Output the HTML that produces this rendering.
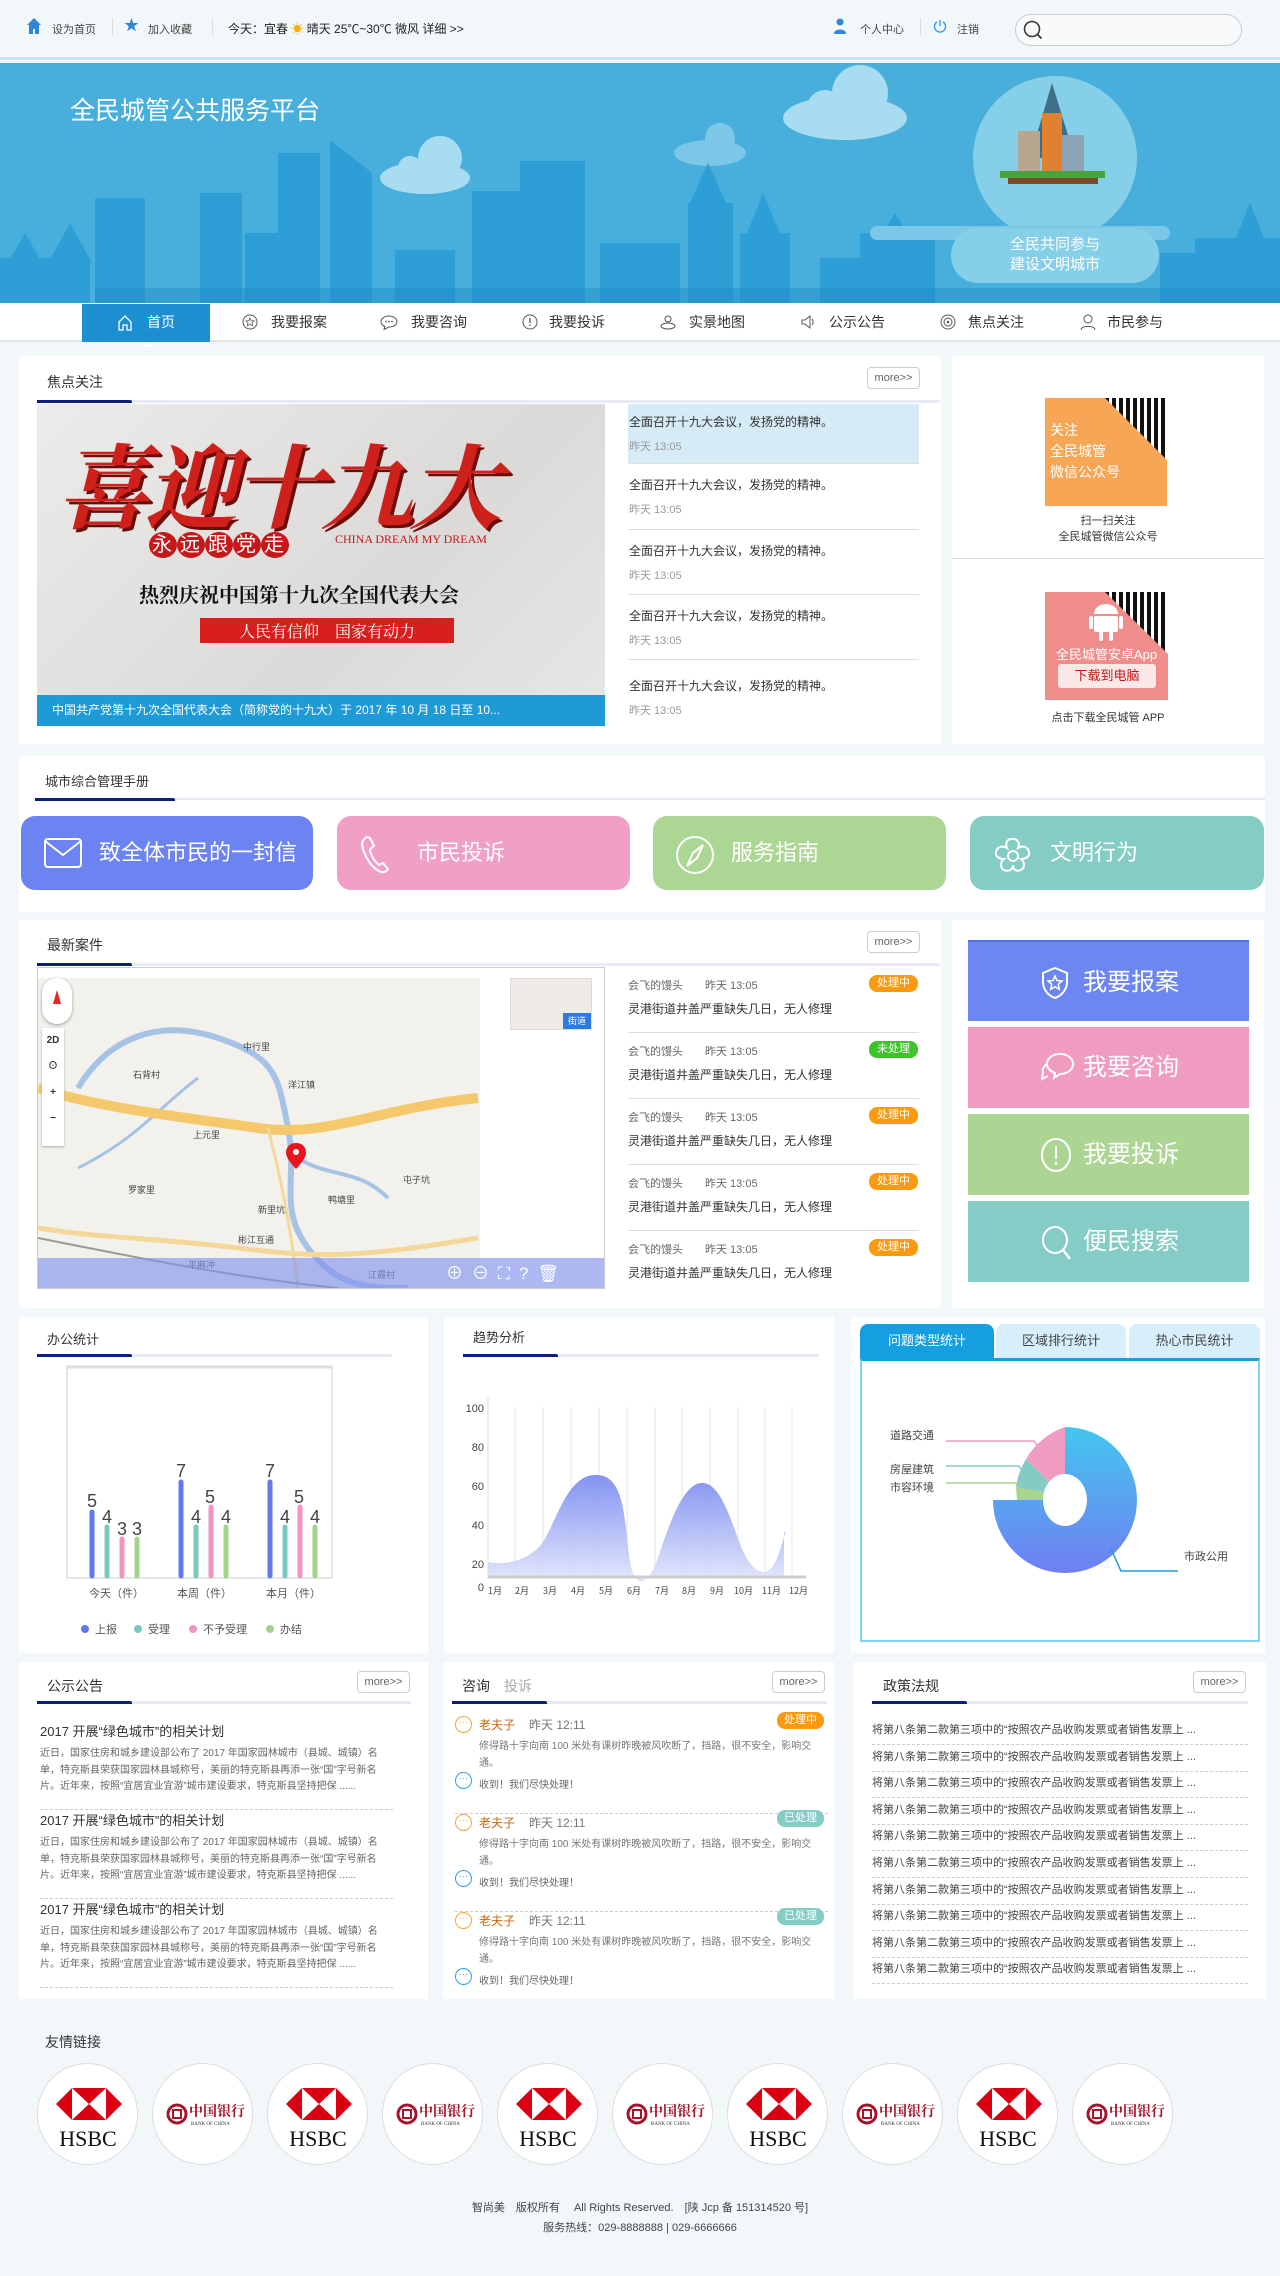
<!DOCTYPE html>
<html><head><meta charset="utf-8">
<style>
*{margin:0;padding:0;box-sizing:border-box}
body{width:1280px;height:2276px;background:#f2f7fa;font-family:"Liberation Sans","Noto Sans CJK SC",sans-serif;color:#333;position:relative;overflow:hidden;font-size:12px}
.a{position:absolute}
.panel{position:absolute;background:#fff}
.ttl{position:absolute;font-size:14px;color:#333}
.uline{position:absolute;height:3px;background:#e6ebf5}
.uline i{position:absolute;left:0;top:0;width:117px;height:3px;background:#0b1e7a;border-radius:0 2px 0 0}
.more{position:absolute;width:53px;height:22px;border:1px solid #ccc;border-radius:4px;font-size:11px;color:#666;text-align:center;line-height:20px;background:#fff}
.nav span{position:absolute;top:303px;height:39px;line-height:39px;font-size:14px;color:#333}
.focus div{position:absolute;left:628px;width:291px;border-bottom:1px solid #ddd}
.focus b{display:block;font-weight:normal;font-size:12px;color:#333;margin:9px 0 0 1px}
.focus s{display:block;text-decoration:none;font-size:11px;color:#999;margin:8px 0 0 1px}
.btn4{position:absolute;top:816px;height:74px;border-radius:14px;color:#fff;font-size:22px;line-height:74px}
.btn4 svg{position:absolute;left:22px;top:19px}
.btn4 span{position:absolute;left:78px}
.case div{position:absolute;left:628px;width:291px;height:66px;border-bottom:1px solid #ddd}
.case .n{position:absolute;left:0;top:10px;font-size:11px;color:#666}
.case .t{position:absolute;left:0;top:33px;font-size:12px;color:#333}
.case .bd{position:absolute;left:241px;top:8px;width:49px;height:17px;border-radius:8px;color:#fff;font-size:11px;text-align:center;line-height:17px}
.rb{position:absolute;left:968px;width:281px;height:81px;color:#fff;font-size:24px;line-height:81px}
.rb span{position:absolute;left:115px}
.rb svg{position:absolute;left:72px;top:24px}
.notice .it{position:absolute;left:40px;width:353px;border-bottom:1px dashed #ccc;height:89px}
.notice h4{font-weight:normal;font-size:13px;color:#333;margin-top:0}
.notice p{font-size:10px;color:#666;line-height:16.5px;margin-top:6px}
.cs{position:absolute;left:455px;width:373px;height:98px;border-bottom:1px dashed #ccc}
.cs .nm{position:absolute;left:24px;top:0;font-size:12px;color:#c8660f}
.cs .tm{position:absolute;left:74px;top:0;font-size:12px;color:#777}
.cs .tx{position:absolute;left:24px;top:22px;width:345px;font-size:10px;color:#777;line-height:17px}
.cs .rp{position:absolute;left:24px;top:60px;font-size:10px;color:#666}
.cs .bd{position:absolute;right:4px;top:-4px;width:47px;height:17px;border-radius:8px;color:#fff;font-size:11px;text-align:center;line-height:17px}
.cs .ic1,.cs .ic2{position:absolute;left:0;width:17px;height:17px;border-radius:50%;border:1.5px solid #f3a23e;font-size:9px;line-height:10px;text-align:center;color:#f3a23e}
.cs .ic2{border-color:#2f9ee8;color:#2f9ee8}
.pl div{position:absolute;left:872px;width:376px;height:26.6px;border-bottom:1px dashed #ccc;font-size:11px;color:#444;line-height:24px;white-space:nowrap;overflow:hidden}
.circ{position:absolute;top:2063px;width:101px;height:102px;border-radius:50%;background:#fff;border:1px solid #ddd}
</style></head><body>

<!-- top bar -->
<div class="a" style="left:0;top:0;width:1280px;height:60px;background:#f2f7fa;border-bottom:3px solid #c9e3f3"></div>
<svg class="a" style="left:27px;top:18px" width="14" height="16" viewBox="0 0 14 16"><path d="M7 0L0 7h2v9h4v-5h2v5h4V7h2z" fill="#2f86d6"/></svg>
<div class="a" style="left:52px;top:21px;font-size:11px;color:#444">设为首页</div>
<div class="a" style="left:112px;top:18px;width:1px;height:18px;background:#ddd"></div>
<div class="a" style="left:124px;top:18px;color:#2f86d6;font-size:15px;line-height:15px">★</div>
<div class="a" style="left:148px;top:21px;font-size:11px;color:#444">加入收藏</div>
<div class="a" style="left:212px;top:18px;width:1px;height:18px;background:#ddd"></div>
<div class="a" style="left:228px;top:20px;font-size:12px;color:#222">今天：宜春 <span style="color:#f6b012">☀</span> 晴天 25℃~30℃ 微风 详细 &gt;&gt;</div>
<svg class="a" style="left:834px;top:18px" width="12" height="16" viewBox="0 0 12 16"><circle cx="6" cy="4" r="3.5" fill="#2f86d6"/><path d="M0 16c0-6 12-6 12 0z" fill="#2f86d6"/></svg>
<div class="a" style="left:860px;top:21px;font-size:11px;color:#444">个人中心</div>
<div class="a" style="left:920px;top:18px;width:1px;height:18px;background:#ddd"></div>
<svg class="a" style="left:933px;top:19px" width="14" height="14" viewBox="0 0 14 14"><path d="M4 3a5.5 5.5 0 1 0 6 0" fill="none" stroke="#2f9ee8" stroke-width="1.4"/><path d="M7 1v6" stroke="#2f9ee8" stroke-width="1.4"/></svg>
<div class="a" style="left:957px;top:21px;font-size:11px;color:#444">注销</div>
<div class="a" style="left:1015px;top:14px;width:227px;height:32px;border:1px solid #ccc;border-radius:16px;background:#f8fafb"></div>
<svg class="a" style="left:1022px;top:19px" width="22" height="22" viewBox="0 0 22 22"><circle cx="10" cy="10" r="7.5" fill="none" stroke="#333" stroke-width="1.5"/><path d="M15.5 15.5l4 4" stroke="#333" stroke-width="1.6"/></svg>

<!-- banner -->
<div class="a" style="left:0;top:63px;width:1280px;height:240px;background:#48afdc;overflow:hidden">
<svg width="1280" height="240" viewBox="0 0 1280 240">
<g fill="#a7dcf1"><ellipse cx="845" cy="55" rx="62" ry="22"/><circle cx="860" cy="30" r="28"/><circle cx="825" cy="45" r="18"/></g>
<g fill="#7cc6e8"><ellipse cx="710" cy="90" rx="36" ry="13"/><circle cx="720" cy="75" r="15"/></g>
<g fill="#a7dcf1"><ellipse cx="425" cy="115" rx="45" ry="16"/><circle cx="440" cy="95" r="22"/><circle cx="410" cy="105" r="12"/></g>
<g fill="#2d9fd6">
<rect x="95" y="135" width="50" height="105"/><rect x="200" y="130" width="42" height="110"/><rect x="278" y="90" width="42" height="150"/><polygon points="330,77 372,110 372,240 330,240"/>
<rect x="472" y="128" width="50" height="112"/><rect x="520" y="98" width="65" height="142"/><rect x="688" y="140" width="45" height="100"/><polygon points="708,100 690,140 726,140"/>
<rect x="740" y="170" width="50" height="70"/><polygon points="763,130 745,175 782,175"/><rect x="395" y="187" width="60" height="53"/>
<rect x="0" y="195" width="90" height="45"/><polygon points="25,170 5,205 45,205"/><polygon points="70,160 48,200 92,200"/>
<rect x="245" y="170" width="40" height="70"/><rect x="860" y="170" width="75" height="70"/><polygon points="895,150 860,205 930,205"/>
<rect x="1195" y="175" width="85" height="65"/><polygon points="1250,140 1230,190 1270,190"/><rect x="1160" y="190" width="40" height="50"/>
<rect x="600" y="180" width="80" height="60"/><rect x="820" y="195" width="40" height="45"/>
</g>
<g fill="#1f8fc6"><rect x="95" y="225" width="1185" height="15" opacity=".5"/></g>
<circle cx="1055" cy="95" r="82" fill="#86cfe8"/>
<rect x="870" y="163" width="300" height="14" rx="7" fill="#7cc6e8"/>
<rect x="951" y="165" width="208" height="55" rx="27" fill="#86cfe8"/>
<g><polygon points="1052,20 1030,95 1075,95" fill="#3d6f88"/><rect x="1018" y="68" width="22" height="40" fill="#b9a690"/><rect x="1042" y="50" width="20" height="58" fill="#e08030"/><rect x="1062" y="72" width="22" height="36" fill="#8aa3b5"/><rect x="1000" y="108" width="105" height="7" fill="#4aa23c"/><rect x="1008" y="115" width="90" height="6" fill="#7a4a28"/></g>
</svg>
<div class="a" style="left:70px;top:28px;font-size:25px;color:#fff">全民城管公共服务平台</div>
<div class="a" style="left:951px;top:172px;width:208px;text-align:center;font-size:15px;color:#fff;line-height:20px">全民共同参与<br>建设文明城市</div>
</div>

<!-- nav -->
<div class="a" style="left:0;top:303px;width:1280px;height:39px;background:#fff;border-bottom:2px solid #dfe3e6"></div>
<div class="a" style="left:82px;top:304px;width:128px;height:38px;background:#1c8fd0"></div>
<div class="a" style="left:143px;top:337px;width:0;height:0;border:5px solid transparent;border-bottom-color:#fff"></div>
<div class="nav">
<svg class="a" style="left:118px;top:315px" width="14" height="16" viewBox="0 0 14 16"><path d="M1 7L7 1l6 6v8H9v-5H5v5H1z" fill="none" stroke="#fff" stroke-width="1.3"/></svg>
<span style="left:147px;color:#fff">首页</span>
<svg class="a" style="left:242px;top:314px" width="16" height="16" viewBox="0 0 16 16"><circle cx="8" cy="8" r="7" fill="none" stroke="#555"/><path d="M8 4l1.2 2.6 2.8.3-2 2 .6 2.8L8 10.3l-2.6 1.4.6-2.8-2-2 2.8-.3z" fill="none" stroke="#555" stroke-width=".8"/></svg>
<span style="left:271px">我要报案</span>
<svg class="a" style="left:380px;top:315px" width="18" height="15" viewBox="0 0 18 15"><path d="M9 1c4.4 0 8 2.6 8 5.6S13.4 12 9 12l-5 2.5 1-3C2.5 10.5 1 8.7 1 6.6 1 3.6 4.6 1 9 1z" fill="none" stroke="#555"/><circle cx="6" cy="6.5" r=".9" fill="#555"/><circle cx="9" cy="6.5" r=".9" fill="#555"/><circle cx="12" cy="6.5" r=".9" fill="#555"/></svg>
<span style="left:411px">我要咨询</span>
<svg class="a" style="left:522px;top:314px" width="16" height="16" viewBox="0 0 16 16"><circle cx="8" cy="8" r="7" fill="none" stroke="#555"/><path d="M8 4v5M8 10.5v1.5" stroke="#555" stroke-width="1.3"/></svg>
<span style="left:549px">我要投诉</span>
<svg class="a" style="left:660px;top:314px" width="16" height="16" viewBox="0 0 16 16"><circle cx="8" cy="5" r="3" fill="none" stroke="#555"/><ellipse cx="8" cy="12" rx="7" ry="3" fill="none" stroke="#555"/></svg>
<span style="left:689px">实景地图</span>
<svg class="a" style="left:800px;top:314px" width="16" height="16" viewBox="0 0 16 16"><path d="M2 6h3l5-4v12l-5-4H2z" fill="none" stroke="#555"/><path d="M12 5c1.5 1.5 1.5 4.5 0 6" fill="none" stroke="#555"/></svg>
<span style="left:829px">公示公告</span>
<svg class="a" style="left:940px;top:314px" width="16" height="16" viewBox="0 0 16 16"><circle cx="8" cy="8" r="7" fill="none" stroke="#555"/><circle cx="8" cy="8" r="4" fill="none" stroke="#555"/><circle cx="8" cy="8" r="1.3" fill="#555"/></svg>
<span style="left:968px">焦点关注</span>
<svg class="a" style="left:1080px;top:314px" width="16" height="16" viewBox="0 0 16 16"><circle cx="8" cy="5" r="4" fill="none" stroke="#555"/><path d="M1 16c0-5 14-5 14 0" fill="none" stroke="#555"/></svg>
<span style="left:1107px">市民参与</span>
</div>

<!-- focus panel -->
<div class="panel" style="left:19px;top:356px;width:922px;height:388px"></div>
<div class="ttl" style="left:47px;top:372px">焦点关注</div>
<div class="more" style="left:867px;top:367px">more&gt;&gt;</div>
<div class="uline" style="left:37px;top:400px;width:903px"><i style="width:95px"></i></div>
<div class="a" style="left:37px;top:404px;width:568px;height:322px;background:linear-gradient(135deg,#ecebea,#dcdad8 60%,#e9e7e5);overflow:hidden">
<div class="a" style="left:20px;top:12px;font-family:'Noto Serif CJK SC',serif;font-size:92px;color:#d0201b;font-weight:bold;letter-spacing:-4px;text-shadow:3px 3px 0 #6b0d0a;font-style:italic">喜迎十九大</div>
<div class="a" style="left:112px;top:124px;font-size:20px;color:#fff;letter-spacing:2px"><span style="background:#c4191b;border-radius:50%;padding:2px 3px">永</span><span style="background:#c4191b;border-radius:50%;padding:2px 3px">远</span><span style="background:#c4191b;border-radius:50%;padding:2px 3px">跟</span><span style="background:#c4191b;border-radius:50%;padding:2px 3px">党</span><span style="background:#c4191b;border-radius:50%;padding:2px 3px">走</span></div>
<div class="a" style="left:298px;top:128px;font-family:'Liberation Serif',serif;font-size:12px;color:#c4191b">CHINA DREAM MY DREAM</div>
<div class="a" style="left:102px;top:175px;font-family:'Noto Serif CJK SC',serif;font-size:20px;color:#111;font-weight:bold">热烈庆祝中国第十九次全国代表大会</div>
<div class="a" style="left:163px;top:214px;width:254px;height:25px;background:#d71f1e;color:#fff;text-align:center;font-family:'Noto Serif CJK SC',serif;font-size:16px;line-height:25px">人民有信仰　国家有动力</div>
<div class="a" style="left:0;top:291px;width:568px;height:31px;background:#1e9bd7;color:#fff;font-size:12px;line-height:31px;padding-left:15px;white-space:nowrap">中国共产党第十九次全国代表大会（简称党的十九大）于 2017 年 10 月 18 日至 10...</div>
</div>
<div class="focus">
<div style="top:404px;height:60px;background:#d5ebf6"><b>全面召开十九大会议，发扬党的精神。</b><s>昨天 13:05</s></div>
<div style="top:464px;height:66px"><b style="margin-top:12px">全面召开十九大会议，发扬党的精神。</b><s>昨天 13:05</s></div>
<div style="top:530px;height:65px"><b style="margin-top:12px">全面召开十九大会议，发扬党的精神。</b><s>昨天 13:05</s></div>
<div style="top:595px;height:65px"><b style="margin-top:12px">全面召开十九大会议，发扬党的精神。</b><s>昨天 13:05</s></div>
<div style="top:660px;height:66px;border:none"><b style="margin-top:17px">全面召开十九大会议，发扬党的精神。</b><s>昨天 13:05</s></div>
</div>
<div class="panel" style="left:952px;top:356px;width:312px;height:388px"></div>
<div class="a" style="left:952px;top:558px;width:312px;height:1px;background:#ddd"></div>
<div class="a" style="left:1045px;top:398px;width:122px;height:108px;background:#f6a655;overflow:hidden">
<div class="a" style="left:60px;top:0;width:62px;height:62px;background:repeating-linear-gradient(90deg,#111 0 4px,#fff 4px 7px);clip-path:polygon(0 0,100% 0,100% 100%)"></div>
<div class="a" style="left:5px;top:22px;color:#fff;font-size:14px;line-height:21px">关注<br>全民城管<br>微信公众号</div></div>
<div class="a" style="left:952px;top:513px;width:312px;text-align:center;font-size:11px;color:#333;line-height:16px">扫一扫关注<br>全民城管微信公众号</div>
<div class="a" style="left:1045px;top:592px;width:123px;height:108px;background:#ef8d8b;overflow:hidden">
<div class="a" style="left:60px;top:0;width:63px;height:62px;background:repeating-linear-gradient(90deg,#111 0 4px,#fff 4px 7px);clip-path:polygon(0 0,100% 0,100% 100%)"></div>
<svg class="a" style="left:44px;top:6px" width="34" height="44" viewBox="0 0 34 44"><path d="M5 16a12 10 0 0 1 24 0z" fill="#fff"/><rect x="5" y="18" width="24" height="16" rx="2" fill="#fff"/><rect x="0" y="18" width="4" height="13" rx="2" fill="#fff"/><rect x="30" y="18" width="4" height="13" rx="2" fill="#fff"/><rect x="10" y="33" width="4" height="10" rx="2" fill="#fff"/><rect x="20" y="33" width="4" height="10" rx="2" fill="#fff"/></svg>
<div class="a" style="left:0;top:52px;width:123px;text-align:center;color:#fff;font-size:13px">全民城管安卓App</div>
<div class="a" style="left:13px;top:72px;width:98px;height:24px;background:#fde8e8;border-radius:3px;color:#c41515;font-size:13px;text-align:center;line-height:24px">下载到电脑</div></div>
<div class="a" style="left:952px;top:709px;width:312px;text-align:center;font-size:11px;color:#333">点击下载全民城管 APP</div>

<!-- manual -->
<div class="panel" style="left:19px;top:756px;width:1246px;height:156px"></div>
<div class="ttl" style="left:45px;top:771px;font-size:13px">城市综合管理手册</div>
<div class="uline" style="left:35px;top:798px;width:1230px;height:2px"><i style="width:140px"></i></div>
<div class="btn4" style="left:21px;width:292px;background:#6c84f2"><svg width="40" height="38" viewBox="0 0 40 38"><rect x="2" y="4" width="36" height="28" rx="3" fill="none" stroke="#fff" stroke-width="2"/><path d="M2 6l18 14 18-14" fill="none" stroke="#fff" stroke-width="2"/></svg><span style="left:78px">致全体市民的一封信</span></div>
<div class="btn4" style="left:337px;width:293px;background:#f0a0c6"><svg width="40" height="40" viewBox="0 0 40 40"><path d="M8 2c-4 2-6 5-4 12 3 10 10 20 18 23 3 1 6-1 7-3l-5-6-4 2C15 26 11 19 11 14l4-3-4-8z" fill="none" stroke="#fff" stroke-width="2"/></svg><span style="left:80px">市民投诉</span></div>
<div class="btn4" style="left:653px;width:293px;background:#abd694"><svg width="40" height="40" viewBox="0 0 40 40"><circle cx="20" cy="20" r="18" fill="none" stroke="#fff" stroke-width="2"/><path d="M28 10l-6 13-10 8 6-13z" fill="none" stroke="#fff" stroke-width="2"/></svg><span style="left:78px">服务指南</span></div>
<div class="btn4" style="left:970px;width:294px;background:#84ccc4"><svg width="42" height="42" viewBox="0 0 42 42"><circle cx="21" cy="21" r="5" fill="none" stroke="#fff" stroke-width="2"/><path d="M21 4c5 0 7 4 5 9 5-3 10-1 11 4s-4 7-8 7c4 3 4 9 0 11s-8 0-8-5c0 5-5 7-9 5s-4-8 0-11c-4 0-9-2-8-7s6-7 11-4c-2-5 0-9 5-9z" fill="none" stroke="#fff" stroke-width="2"/></svg><span style="left:80px">文明行为</span></div>

<!-- cases -->
<div class="panel" style="left:19px;top:920px;width:922px;height:388px"></div>
<div class="ttl" style="left:47px;top:935px">最新案件</div>
<div class="more" style="left:867px;top:931px">more&gt;&gt;</div>
<div class="uline" style="left:37px;top:963px;width:903px"><i style="width:95px"></i></div>
<div class="a" style="left:37px;top:967px;width:568px;height:322px;background:#fff;border:1px solid #ccc;overflow:hidden">
<div class="a" style="left:0;top:10px;width:442px;height:312px;background:#f3f1ec"></div>
<svg class="a" style="left:0;top:10px" width="442" height="312" viewBox="0 0 442 312">
<path d="M40 110C70 60 120 40 180 60s60 40 70 90c10 50-10 80 20 120s60 40 100 40" fill="none" stroke="#a6c3e6" stroke-width="6"/>
<path d="M160 100c-40 30-60 60-120 90" fill="none" stroke="#a6c3e6" stroke-width="3"/>
<path d="M260 180c30 20 60 10 90 40" fill="none" stroke="#a6c3e6" stroke-width="4"/>
<path d="M0 110c60 20 150 30 220 40s120-20 220-30" fill="none" stroke="#f5c86c" stroke-width="10"/>
<path d="M0 250c60 10 120 10 200 20s120 10 240 -10" fill="none" stroke="#f5d899" stroke-width="5"/>
<path d="M230 150c10 40 20 80 30 160" fill="none" stroke="#f5d899" stroke-width="3"/>
<path d="M0 260c100 20 200 40 300 50" fill="none" stroke="#999" stroke-width="2"/>
<g font-size="9" fill="#444" font-family="Noto Sans CJK SC"><text x="95" y="100">石背村</text><text x="205" y="72">中行里</text><text x="250" y="110">洋江镇</text><text x="155" y="160">上元里</text><text x="90" y="215">罗家里</text><text x="220" y="235">新里坑</text><text x="290" y="225">鸭塘里</text><text x="365" y="205">屯子坑</text><text x="150" y="290">平麻冲</text><text x="200" y="265">彬江互通</text><text x="330" y="300">江霞村</text></g>
<path d="M258 165c-8 0-10 6-10 10 0 6 10 16 10 16s10-10 10-16c0-4-2-10-10-10z" fill="#e8141e"/><circle cx="258" cy="174" r="3" fill="#fff"/>
</svg>
<div class="a" style="left:4px;top:10px;width:30px;height:46px;border-radius:15px;background:#fff;box-shadow:0 1px 3px #999"><div class="a" style="left:11px;top:8px;width:0;height:0;border:4px solid transparent;border-bottom:14px solid #e22"></div></div>
<div class="a" style="left:4px;top:60px;width:22px;height:118px;background:#fff;box-shadow:0 1px 2px #aaa;font-size:10px;text-align:center;line-height:26px;font-weight:bold">2D<br>⊙<br>+<br>−</div>
<div class="a" style="left:472px;top:10px;width:82px;height:52px;background:#eeebe6;border:1px solid #ddd"><div class="a" style="right:0;bottom:0;width:28px;height:16px;background:#2b7be0;color:#fff;font-size:9px;text-align:center;line-height:16px">街道</div></div>
<div class="a" style="left:0;top:290px;width:568px;height:32px;background:rgba(130,148,238,.65);color:#fff;font-size:17px;line-height:32px;padding-left:408px;letter-spacing:9px">⊕⊖⛶?🗑</div>
</div>
<div class="case">
<div style="top:967px"><span class="n">会飞的馒头　　昨天 13:05</span><span class="t">灵港街道井盖严重缺失几日，无人修理</span><span class="bd" style="background:#f99a10">处理中</span></div>
<div style="top:1033px"><span class="n">会飞的馒头　　昨天 13:05</span><span class="t">灵港街道井盖严重缺失几日，无人修理</span><span class="bd" style="background:#3ec32a">未处理</span></div>
<div style="top:1099px"><span class="n">会飞的馒头　　昨天 13:05</span><span class="t">灵港街道井盖严重缺失几日，无人修理</span><span class="bd" style="background:#f99a10">处理中</span></div>
<div style="top:1165px"><span class="n">会飞的馒头　　昨天 13:05</span><span class="t">灵港街道井盖严重缺失几日，无人修理</span><span class="bd" style="background:#f99a10">处理中</span></div>
<div style="top:1231px;border:none"><span class="n">会飞的馒头　　昨天 13:05</span><span class="t">灵港街道井盖严重缺失几日，无人修理</span><span class="bd" style="background:#f99a10">处理中</span></div>
</div>
<div class="panel" style="left:952px;top:920px;width:312px;height:388px"></div>
<div class="rb" style="top:940px;background:#6d87f2;border-top:2px solid #4f6ee8"><svg width="30" height="34" viewBox="0 0 30 34"><path d="M15 2l12 5v9c0 8-6 14-12 16C9 30 3 24 3 16V7z" fill="none" stroke="#fff" stroke-width="2"/><path d="M15 10l2 4.5 5 .5-3.7 3.3 1 5L15 20.8 10.7 23.3l1-5L8 15l5-.5z" fill="none" stroke="#fff" stroke-width="1.5"/></svg><span>我要报案</span></div>
<div class="rb" style="top:1027px;background:#f09cc0"><svg width="36" height="32" viewBox="0 0 36 32"><path d="M20 3c7 0 13 4 13 10s-6 10-13 10l-6 4 1-5c-5-2-8-5-8-9 0-6 6-10 13-10z" fill="none" stroke="#fff" stroke-width="2"/><path d="M7 13c-3 2-5 5-4 8l-1 7 6-3" fill="none" stroke="#fff" stroke-width="2"/></svg><span>我要咨询</span></div>
<div class="rb" style="top:1114px;background:#acd593"><svg width="32" height="34" viewBox="0 0 32 34"><ellipse cx="16" cy="17" rx="14" ry="16" fill="none" stroke="#fff" stroke-width="2"/><path d="M16 8v13M16 24v3" stroke="#fff" stroke-width="2"/></svg><span>我要投诉</span></div>
<div class="rb" style="top:1201px;background:#84ccc5"><svg width="34" height="36" viewBox="0 0 34 36"><ellipse cx="15" cy="15" rx="12" ry="13" fill="none" stroke="#fff" stroke-width="2"/><path d="M23 25l7 9" stroke="#fff" stroke-width="2.5"/></svg><span>便民搜索</span></div>

<!-- stats -->
<div class="panel" style="left:19px;top:1317px;width:409px;height:336px"></div>
<div class="ttl" style="left:47px;top:1329px;font-size:13px">办公统计</div>
<div class="uline" style="left:37px;top:1354px;width:355px"><i style="width:95px"></i></div>
<svg class="a" style="left:19px;top:1317px" width="409" height="336" viewBox="0 0 409 336">
<rect x="48" y="49" width="265" height="212" fill="none" stroke="#ccc"/><line x1="48" y1="50" x2="313" y2="50" stroke="#ddd" stroke-width="3"/>
<g stroke-linecap="round" stroke-width="5">
<line x1="73" y1="195" x2="73" y2="259" stroke="#6378ee"/><line x1="88" y1="210" x2="88" y2="259" stroke="#79c9c3"/><line x1="103" y1="222" x2="103" y2="259" stroke="#f096bf"/><line x1="118" y1="222" x2="118" y2="259" stroke="#a3d38b"/>
<line x1="162" y1="165" x2="162" y2="259" stroke="#6378ee"/><line x1="177" y1="210" x2="177" y2="259" stroke="#79c9c3"/><line x1="192" y1="190" x2="192" y2="259" stroke="#f096bf"/><line x1="207" y1="210" x2="207" y2="259" stroke="#a3d38b"/>
<line x1="251" y1="165" x2="251" y2="259" stroke="#6378ee"/><line x1="266" y1="210" x2="266" y2="259" stroke="#79c9c3"/><line x1="281" y1="190" x2="281" y2="259" stroke="#f096bf"/><line x1="296" y1="210" x2="296" y2="259" stroke="#a3d38b"/>
</g>
<g font-size="18" fill="#444" font-family="Liberation Sans"><text x="68" y="190">5</text><text x="83" y="206">4</text><text x="98" y="218">3</text><text x="113" y="218">3</text><text x="157" y="160">7</text><text x="186" y="186">5</text><text x="172" y="206">4</text><text x="202" y="206">4</text><text x="246" y="160">7</text><text x="275" y="186">5</text><text x="261" y="206">4</text><text x="291" y="206">4</text></g>
<g font-size="11" fill="#555" font-family="Noto Sans CJK SC"><text x="70" y="280">今天（件）</text><text x="158" y="280">本周（件）</text><text x="247" y="280">本月（件）</text>
<circle cx="66" cy="312" r="4" fill="#6378ee"/><text x="76" y="316">上报</text><circle cx="119" cy="312" r="4" fill="#79c9c3"/><text x="129" y="316">受理</text><circle cx="174" cy="312" r="4" fill="#f096bf"/><text x="184" y="316">不予受理</text><circle cx="251" cy="312" r="4" fill="#a3d38b"/><text x="261" y="316">办结</text></g>
</svg>

<div class="panel" style="left:444px;top:1317px;width:390px;height:336px"></div>
<div class="ttl" style="left:473px;top:1327px;font-size:13px">趋势分析</div>
<div class="uline" style="left:463px;top:1354px;width:356px"><i style="width:95px"></i></div>
<svg class="a" style="left:444px;top:1317px" width="390" height="336" viewBox="0 0 390 336">
<defs><linearGradient id="g1" x1="0" y1="0" x2="0" y2="1"><stop offset="0" stop-color="#6d80ee"/><stop offset="1" stop-color="#dfe3fb"/></linearGradient>
<linearGradient id="g2" x1="0" y1="0" x2="0" y2="1"><stop offset="0" stop-color="#44c6ef"/><stop offset="1" stop-color="#6f7ff2"/></linearGradient></defs>
<line x1="44" y1="80" x2="44" y2="262" stroke="#ddd"/>
<g stroke="#e6e6e6"><line x1="71" y1="90" x2="71" y2="260"/><line x1="99" y1="90" x2="99" y2="260"/><line x1="127" y1="90" x2="127" y2="260"/><line x1="155" y1="90" x2="155" y2="260"/><line x1="183" y1="90" x2="183" y2="260"/><line x1="211" y1="90" x2="211" y2="260"/><line x1="238" y1="90" x2="238" y2="260"/><line x1="266" y1="90" x2="266" y2="260"/><line x1="294" y1="90" x2="294" y2="260"/><line x1="321" y1="90" x2="321" y2="260"/><line x1="348" y1="90" x2="348" y2="260"/></g>
<path d="M44 245C60 248 80 245 95 230S120 160 150 158s30 40 35 80 20 30 30 0 25-75 45-72 30 50 40 70 25 30 35 0 5-20 5-20V260H44z" fill="url(#g1)" opacity=".85"/>
<line x1="44" y1="260" x2="362" y2="260" stroke="#ccc" stroke-width="3"/>
<g font-size="11" fill="#444" font-family="Liberation Sans" text-anchor="end"><text x="40" y="95">100</text><text x="40" y="134">80</text><text x="40" y="173">60</text><text x="40" y="212">40</text><text x="40" y="251">20</text><text x="40" y="274">0</text></g>
<g font-size="9" fill="#444" font-family="Noto Sans CJK SC"><text x="44" y="277">1月</text><text x="71" y="277">2月</text><text x="99" y="277">3月</text><text x="127" y="277">4月</text><text x="155" y="277">5月</text><text x="183" y="277">6月</text><text x="211" y="277">7月</text><text x="238" y="277">8月</text><text x="266" y="277">9月</text><text x="290" y="277">10月</text><text x="318" y="277">11月</text><text x="345" y="277">12月</text></g>
</svg>

<div class="panel" style="left:851px;top:1317px;width:414px;height:336px"></div>
<div class="a" style="left:860px;top:1358px;width:400px;height:284px;border:2px solid #7dd3f3;border-top:3px solid #169fe0"></div>
<div class="a" style="left:860px;top:1324px;width:134px;height:34px;background:#169fe0;border-radius:8px 8px 0 0;color:#fff;font-size:13px;text-align:center;line-height:34px">问题类型统计</div>
<div class="a" style="left:996px;top:1324px;width:130px;height:34px;background:#d6effa;border-radius:8px 8px 0 0;color:#444;font-size:13px;text-align:center;line-height:34px">区域排行统计</div>
<div class="a" style="left:1129px;top:1324px;width:131px;height:34px;background:#d6effa;border-radius:8px 8px 0 0;color:#444;font-size:13px;text-align:center;line-height:34px">热心市民统计</div>
<svg class="a" style="left:851px;top:1317px" width="414" height="336" viewBox="0 0 414 336">
<path d="M214 110A72 73 0 1 1 142 183H192A22 26 0 1 0 214 157Z" fill="url(#g2)"/>
<path d="M214 110V157A22 26 0 0 0 198 165L175 142A72 73 0 0 1 214 110Z" fill="#f09cc0"/>
<path d="M175 142L198 165A22 26 0 0 0 193 175L165 170A72 73 0 0 1 175 142Z" fill="#83cbc3"/>
<path d="M165 170L193 175A22 26 0 0 0 192 183L166 183Z" fill="#a8d48e"/>
<g fill="none" stroke-width="1.5"><path d="M95 124H183l8 12" stroke="#f09cc0"/><path d="M95 149H168l6 10" stroke="#83cbc3"/><path d="M95 166H165l4 10" stroke="#a8d48e"/><path d="M260 232l10 22H327" stroke="#169fe0"/></g>
<g font-size="11" fill="#444" font-family="Noto Sans CJK SC"><text x="39" y="122">道路交通</text><text x="39" y="156">房屋建筑</text><text x="39" y="174">市容环境</text><text x="333" y="243">市政公用</text></g>
</svg>

<!-- bottom panels -->
<div class="panel" style="left:19px;top:1662px;width:409px;height:337px"></div>
<div class="ttl" style="left:47px;top:1676px">公示公告</div>
<div class="more" style="left:357px;top:1671px">more&gt;&gt;</div>
<div class="uline" style="left:37px;top:1701px;width:374px"><i style="width:95px"></i></div>
<div class="notice">
<div class="it" style="top:1721px"><h4>2017 开展“绿色城市”的相关计划</h4><p>近日，国家住房和城乡建设部公布了 2017 年国家园林城市（县城、城镇）名单，特克斯县荣获国家园林县城称号，美丽的特克斯县再添一张“国”字号新名片。近年来，按照“宜居宜业宜游”城市建设要求，特克斯县坚持把保 ......</p></div>
<div class="it" style="top:1810px"><h4>2017 开展“绿色城市”的相关计划</h4><p>近日，国家住房和城乡建设部公布了 2017 年国家园林城市（县城、城镇）名单，特克斯县荣获国家园林县城称号，美丽的特克斯县再添一张“国”字号新名片。近年来，按照“宜居宜业宜游”城市建设要求，特克斯县坚持把保 ......</p></div>
<div class="it" style="top:1899px"><h4>2017 开展“绿色城市”的相关计划</h4><p>近日，国家住房和城乡建设部公布了 2017 年国家园林城市（县城、城镇）名单，特克斯县荣获国家园林县城称号，美丽的特克斯县再添一张“国”字号新名片。近年来，按照“宜居宜业宜游”城市建设要求，特克斯县坚持把保 ......</p></div>
</div>

<div class="panel" style="left:443px;top:1662px;width:391px;height:337px"></div>
<div class="ttl" style="left:462px;top:1676px">咨询　<span style="color:#aaa">投诉</span></div>
<div class="more" style="left:772px;top:1671px">more&gt;&gt;</div>
<div class="uline" style="left:452px;top:1701px;width:375px"><i style="width:95px"></i></div>
<div class="cs" style="top:1716px"><span class="ic1">···</span><span class="nm">老夫子</span><span class="tm">昨天 12:11</span><span class="bd" style="background:#f99a10">处理中</span><div class="tx">修得路十字向南 100 米处有课树昨晚被风吹断了，挡路，很不安全，影响交通。</div><span class="ic2" style="top:56px">···</span><span class="rp">收到！我们尽快处理！</span></div>
<div class="cs" style="top:1814px"><span class="ic1">···</span><span class="nm">老夫子</span><span class="tm">昨天 12:11</span><span class="bd" style="background:#84ccc5">已处理</span><div class="tx">修得路十字向南 100 米处有课树昨晚被风吹断了，挡路，很不安全，影响交通。</div><span class="ic2" style="top:56px">···</span><span class="rp">收到！我们尽快处理！</span></div>
<div class="cs" style="top:1912px;border:none"><span class="ic1">···</span><span class="nm">老夫子</span><span class="tm">昨天 12:11</span><span class="bd" style="background:#84ccc5">已处理</span><div class="tx">修得路十字向南 100 米处有课树昨晚被风吹断了，挡路，很不安全，影响交通。</div><span class="ic2" style="top:56px">···</span><span class="rp">收到！我们尽快处理！</span></div>

<div class="panel" style="left:854px;top:1662px;width:412px;height:337px"></div>
<div class="ttl" style="left:883px;top:1676px">政策法规</div>
<div class="more" style="left:1193px;top:1671px">more&gt;&gt;</div>
<div class="uline" style="left:872px;top:1701px;width:376px"><i style="width:95px"></i></div>
<div class="pl">
<div style="top:1718px">将第八条第二款第三项中的“按照农产品收购发票或者销售发票上 ...</div>
<div style="top:1745px">将第八条第二款第三项中的“按照农产品收购发票或者销售发票上 ...</div>
<div style="top:1771px">将第八条第二款第三项中的“按照农产品收购发票或者销售发票上 ...</div>
<div style="top:1798px">将第八条第二款第三项中的“按照农产品收购发票或者销售发票上 ...</div>
<div style="top:1824px">将第八条第二款第三项中的“按照农产品收购发票或者销售发票上 ...</div>
<div style="top:1851px">将第八条第二款第三项中的“按照农产品收购发票或者销售发票上 ...</div>
<div style="top:1878px">将第八条第二款第三项中的“按照农产品收购发票或者销售发票上 ...</div>
<div style="top:1904px">将第八条第二款第三项中的“按照农产品收购发票或者销售发票上 ...</div>
<div style="top:1931px">将第八条第二款第三项中的“按照农产品收购发票或者销售发票上 ...</div>
<div style="top:1957px">将第八条第二款第三项中的“按照农产品收购发票或者销售发票上 ...</div>
</div>

<!-- friends -->
<div class="a" style="left:45px;top:2032px;font-size:14px;color:#333">友情链接</div>
<div class="circ" style="left:37px"><svg width="101" height="102" viewBox="0 0 101 102"><g transform="translate(18,24)"><polygon points="0,16 16,0 16,32" fill="#db0011"/><polygon points="66,16 50,0 50,32" fill="#db0011"/><polygon points="16,0 50,0 33,16" fill="#db0011"/><polygon points="16,32 50,32 33,16" fill="#db0011"/></g><text x="50" y="82" text-anchor="middle" font-family="Liberation Serif" font-size="22" fill="#111">HSBC</text></svg></div>
<div class="circ" style="left:152px"><svg width="101" height="102" viewBox="0 0 101 102"><circle cx="24" cy="50" r="9" fill="none" stroke="#a5142a" stroke-width="3"/><rect x="20" y="46" width="8" height="8" fill="none" stroke="#a5142a" stroke-width="2"/><text x="36" y="52" font-family="Noto Serif CJK SC" font-size="14" fill="#a5142a" font-weight="bold">中国银行</text><text x="38" y="61" font-size="5" font-family="Liberation Serif" fill="#333">BANK OF CHINA</text></svg></div>
<div class="circ" style="left:267px"><svg width="101" height="102" viewBox="0 0 101 102"><g transform="translate(18,24)"><polygon points="0,16 16,0 16,32" fill="#db0011"/><polygon points="66,16 50,0 50,32" fill="#db0011"/><polygon points="16,0 50,0 33,16" fill="#db0011"/><polygon points="16,32 50,32 33,16" fill="#db0011"/></g><text x="50" y="82" text-anchor="middle" font-family="Liberation Serif" font-size="22" fill="#111">HSBC</text></svg></div>
<div class="circ" style="left:382px"><svg width="101" height="102" viewBox="0 0 101 102"><circle cx="24" cy="50" r="9" fill="none" stroke="#a5142a" stroke-width="3"/><rect x="20" y="46" width="8" height="8" fill="none" stroke="#a5142a" stroke-width="2"/><text x="36" y="52" font-family="Noto Serif CJK SC" font-size="14" fill="#a5142a" font-weight="bold">中国银行</text><text x="38" y="61" font-size="5" font-family="Liberation Serif" fill="#333">BANK OF CHINA</text></svg></div>
<div class="circ" style="left:497px"><svg width="101" height="102" viewBox="0 0 101 102"><g transform="translate(18,24)"><polygon points="0,16 16,0 16,32" fill="#db0011"/><polygon points="66,16 50,0 50,32" fill="#db0011"/><polygon points="16,0 50,0 33,16" fill="#db0011"/><polygon points="16,32 50,32 33,16" fill="#db0011"/></g><text x="50" y="82" text-anchor="middle" font-family="Liberation Serif" font-size="22" fill="#111">HSBC</text></svg></div>
<div class="circ" style="left:612px"><svg width="101" height="102" viewBox="0 0 101 102"><circle cx="24" cy="50" r="9" fill="none" stroke="#a5142a" stroke-width="3"/><rect x="20" y="46" width="8" height="8" fill="none" stroke="#a5142a" stroke-width="2"/><text x="36" y="52" font-family="Noto Serif CJK SC" font-size="14" fill="#a5142a" font-weight="bold">中国银行</text><text x="38" y="61" font-size="5" font-family="Liberation Serif" fill="#333">BANK OF CHINA</text></svg></div>
<div class="circ" style="left:727px"><svg width="101" height="102" viewBox="0 0 101 102"><g transform="translate(18,24)"><polygon points="0,16 16,0 16,32" fill="#db0011"/><polygon points="66,16 50,0 50,32" fill="#db0011"/><polygon points="16,0 50,0 33,16" fill="#db0011"/><polygon points="16,32 50,32 33,16" fill="#db0011"/></g><text x="50" y="82" text-anchor="middle" font-family="Liberation Serif" font-size="22" fill="#111">HSBC</text></svg></div>
<div class="circ" style="left:842px"><svg width="101" height="102" viewBox="0 0 101 102"><circle cx="24" cy="50" r="9" fill="none" stroke="#a5142a" stroke-width="3"/><rect x="20" y="46" width="8" height="8" fill="none" stroke="#a5142a" stroke-width="2"/><text x="36" y="52" font-family="Noto Serif CJK SC" font-size="14" fill="#a5142a" font-weight="bold">中国银行</text><text x="38" y="61" font-size="5" font-family="Liberation Serif" fill="#333">BANK OF CHINA</text></svg></div>
<div class="circ" style="left:957px"><svg width="101" height="102" viewBox="0 0 101 102"><g transform="translate(18,24)"><polygon points="0,16 16,0 16,32" fill="#db0011"/><polygon points="66,16 50,0 50,32" fill="#db0011"/><polygon points="16,0 50,0 33,16" fill="#db0011"/><polygon points="16,32 50,32 33,16" fill="#db0011"/></g><text x="50" y="82" text-anchor="middle" font-family="Liberation Serif" font-size="22" fill="#111">HSBC</text></svg></div>
<div class="circ" style="left:1072px"><svg width="101" height="102" viewBox="0 0 101 102"><circle cx="24" cy="50" r="9" fill="none" stroke="#a5142a" stroke-width="3"/><rect x="20" y="46" width="8" height="8" fill="none" stroke="#a5142a" stroke-width="2"/><text x="36" y="52" font-family="Noto Serif CJK SC" font-size="14" fill="#a5142a" font-weight="bold">中国银行</text><text x="38" y="61" font-size="5" font-family="Liberation Serif" fill="#333">BANK OF CHINA</text></svg></div>

<div class="a" style="left:0;top:2199px;width:1280px;text-align:center;font-size:11px;color:#444">智尚美　版权所有　 All Rights Reserved.　[陕 Jcp 备 151314520 号]</div>
<div class="a" style="left:0;top:2219px;width:1280px;text-align:center;font-size:11px;color:#444">服务热线：029-8888888 | 029-6666666</div>
</body></html>
